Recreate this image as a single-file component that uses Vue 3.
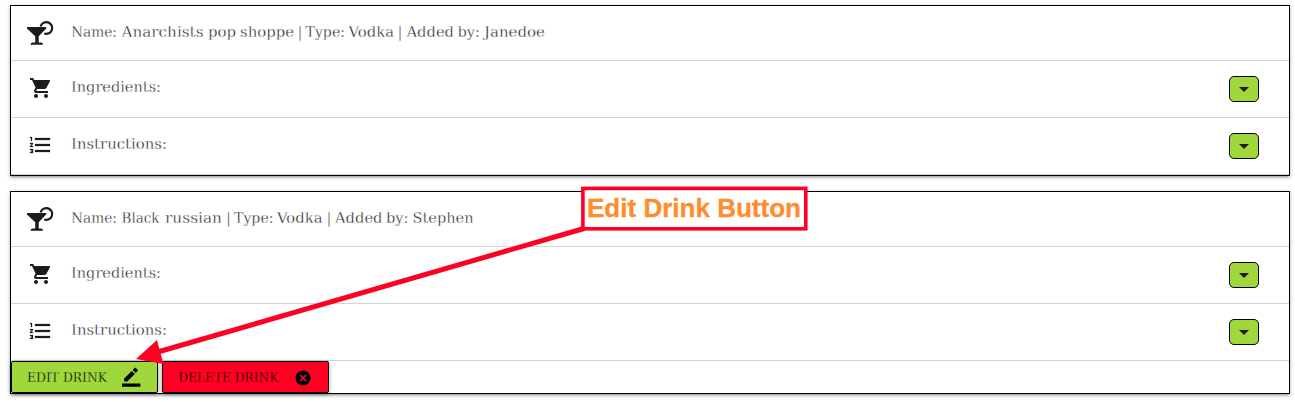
<script setup>
const common = [
  { kind: 'cart', label: [['Ingredients:', 0, 90]] },
  { kind: 'list', label: [['Instructions:', 0, 96]] },
]
const drinks = [
  {
    name: [['Name:', 0, 46], ['Anarchists', 50.5, 82], ['pop', 137, 28], ['shoppe', 169, 54], ['|', 227, 4], ['Type:', 234.5, 39.5], ['Vodka', 277.5, 45.5], ['|', 327, 4], ['Added', 335.5, 47.5], ['by:', 386.5, 22.5], ['Janedoe', 413, 61]],
    editable: false,
  },
  {
    name: [['Name:', 0, 46], ['Black', 50.5, 38], ['russian', 94, 57], ['|', 155.5, 4], ['Type:', 163, 39.5], ['Vodka', 206, 45.5], ['|', 256, 4], ['Added', 264, 47.5], ['by:', 315, 22.5], ['Stephen', 341.5, 61]],
    editable: true,
  },
]
</script>

<template>
  <main class="page">
    <section v-for="(drink, i) in drinks" :key="i" class="card">
      <div class="row head">
        <svg class="icon martini" width="30" height="28" viewBox="0 0 30 28">
          <path d="M15.6 6.6A5.9 5.9 0 1 1 19.2 13.5" fill="none" stroke="currentColor" stroke-width="2.2" />
          <path d="M2 7h19.2v1.6l-7.5 7.6v6.4h2.3q2 0 2 2.2H5.6q0-2.2 2-2.2h2.6v-6.4L2 8.6z" fill="currentColor" />
        </svg>
        <svg class="label" width="600" height="24">
          <text v-for="(w, n) in drink.name" :key="n" :x="w[1]" y="17" :textLength="w[2]" lengthAdjust="spacingAndGlyphs">{{ w[0] }}</text>
        </svg>
      </div>
      <div v-for="row in common" :key="row.kind" class="row">
        <svg class="icon" :class="row.kind" width="24" height="24" viewBox="0 0 24 24" fill="currentColor">
          <path v-if="row.kind === 'cart'" d="M7 18c-1.1 0-1.99.9-1.99 2S5.9 22 7 22s2-.9 2-2-.9-2-2-2zM1 2v2h2l3.6 7.59-1.35 2.45c-.16.28-.25.61-.25.96 0 1.1.9 2 2 2h12v-2H7.42c-.14 0-.25-.11-.25-.25l.03-.12.9-1.63h7.45c.75 0 1.41-.41 1.75-1.03l3.58-6.49A1 1 0 0 0 20 4H5.21l-.94-2H1zm16 16c-1.1 0-1.99.9-1.99 2s.89 2 1.99 2 2-.9 2-2-.9-2-2-2z" />
          <path v-else d="M2 17h2v.5H3v1h1v.5H2v1h3v-4H2v1zm1-9h1V4H2v1h1v3zm-1 3h1.8L2 13.1v.9h3v-1H3.2L5 10.9V10H2v1zm5-6v2h15V5H7zm0 14h15v-2H7v2zm0-6h15v-2H7v2z" stroke="currentColor" stroke-width=".25" />
        </svg>
        <svg class="label" width="200" height="24">
          <text v-for="w in row.label" :key="w[0]" :x="w[1]" y="17" :textLength="w[2]" lengthAdjust="spacingAndGlyphs">{{ w[0] }}</text>
        </svg>
        <button class="toggle" aria-label="Expand">
          <svg width="10" height="5" viewBox="0 0 10 5"><path d="M0 0h10L5 5z" fill="#1c1c10" /></svg>
        </button>
      </div>
      <div v-if="drink.editable" class="actions">
        <button class="btn edit">
          <svg width="81" height="20"><text x="0" y="15" textLength="80" lengthAdjust="spacingAndGlyphs">EDIT DRINK</text></svg>
          <svg width="19" height="20" viewBox="0 0 19 20">
            <path d="M2.2 11.4v3h3l7.6-7.5-3-3zM10.7 3l3 3 1.9-1.9c.4-.4.4-.9 0-1.3l-1.7-1.7c-.4-.4-.9-.4-1.3 0zM0 16.6h18.4v3.2H0z" />
          </svg>
        </button>
        <button class="btn delete">
          <svg width="101" height="20"><text x="-0.7" y="15" textLength="100" lengthAdjust="spacingAndGlyphs">DELETE DRINK</text></svg>
          <svg width="16" height="20" viewBox="0 0 16 20">
            <circle cx="8" cy="11" r="7.5" />
            <path d="M5 8l6 6M11 8l-6 6" stroke="#ff0a25" stroke-width="1.6" />
          </svg>
        </button>
      </div>
    </section>
    <svg class="callout" width="1295" height="402">
      <path d="M584 228.5L156 352.5" stroke="#ff0022" stroke-width="5" />
      <path d="M136 359l21-19 6.5 24z" fill="#ff0022" />
      <rect x="582.9" y="188.4" width="222.9" height="40.4" fill="#fff" stroke="#ff0022" stroke-width="3.6" />
      <text x="587" y="217.3" textLength="214" lengthAdjust="spacingAndGlyphs">Edit Drink Button</text>
    </svg>
  </main>
</template>

<style>
body { margin: 0; background: #fff; overflow: hidden; }
</style>

<style scoped>
.page {
  position: relative;
  box-sizing: border-box;
  height: 402px;
  padding: 5px 5px 0 10px;
  overflow: hidden;
  font-family: "DejaVu Serif", serif;
}
svg { display: block; flex: none; overflow: visible; }
.card {
  box-sizing: border-box;
  width: 1280px;
  margin-bottom: 15px;
  border: 1px solid #000;
  background: #fff;
  box-shadow: 0 2px 2px rgba(0, 0, 0, .14), 0 3px 1px -2px rgba(0, 0, 0, .12), 0 1px 5px rgba(0, 0, 0, .2);
}
.row {
  box-sizing: border-box;
  display: flex;
  align-items: flex-start;
  height: 57px;
  padding: 0 30px 0 14px;
  border-bottom: 1px solid #d4d4d4;
}
.head { height: 55px; }
.icon { color: #1c1c1c; }
.martini { margin: 14px 15.6px 0 0; }
.cart { margin: 15px 18.1px 0 3.5px; }
.list { margin: 15px 18.6px 0 3px; }
.row .label { margin: 14px 0 0; }
.label text {
  font-size: 15px;
  fill: #1c1c1c;
  stroke: #fff;
  stroke-width: .32px;
}
.toggle {
  display: flex;
  align-items: center;
  justify-content: center;
  box-sizing: border-box;
  width: 30px;
  height: 26px;
  margin: 15px 0 0 auto;
  padding: 0 1px 0 0;
  border: 1px solid #000;
  border-radius: 5px;
  background: #a0d83c;
}
.actions { display: flex; gap: 4px; height: 32px; }
.btn {
  display: flex;
  align-items: center;
  box-sizing: border-box;
  height: 32px;
  padding: 0 0 0 15px;
  border: 1px solid #000;
  border-radius: 2px;
  box-shadow: 0 1px 4px rgba(0, 0, 0, .35);
}
.btn text {
  font-family: "DejaVu Serif", serif;
  font-size: 13px;
  fill: #000;
  stroke-width: .3px;
}
.edit { width: 147px; background: #a0d83c; gap: 14px; }
.edit text { stroke: #a0d83c; }
.delete { width: 167px; padding-left: 16px; background: #ff0022; gap: 15px; }
.delete text { stroke: #ff0022; }
.callout { position: absolute; left: 0; top: 0; pointer-events: none; }
.callout text {
  font: bold 25.5px "Liberation Sans", sans-serif;
  fill: #ff8c2e;
  stroke: #ff8c2e;
  stroke-width: .3px;
}
</style>
